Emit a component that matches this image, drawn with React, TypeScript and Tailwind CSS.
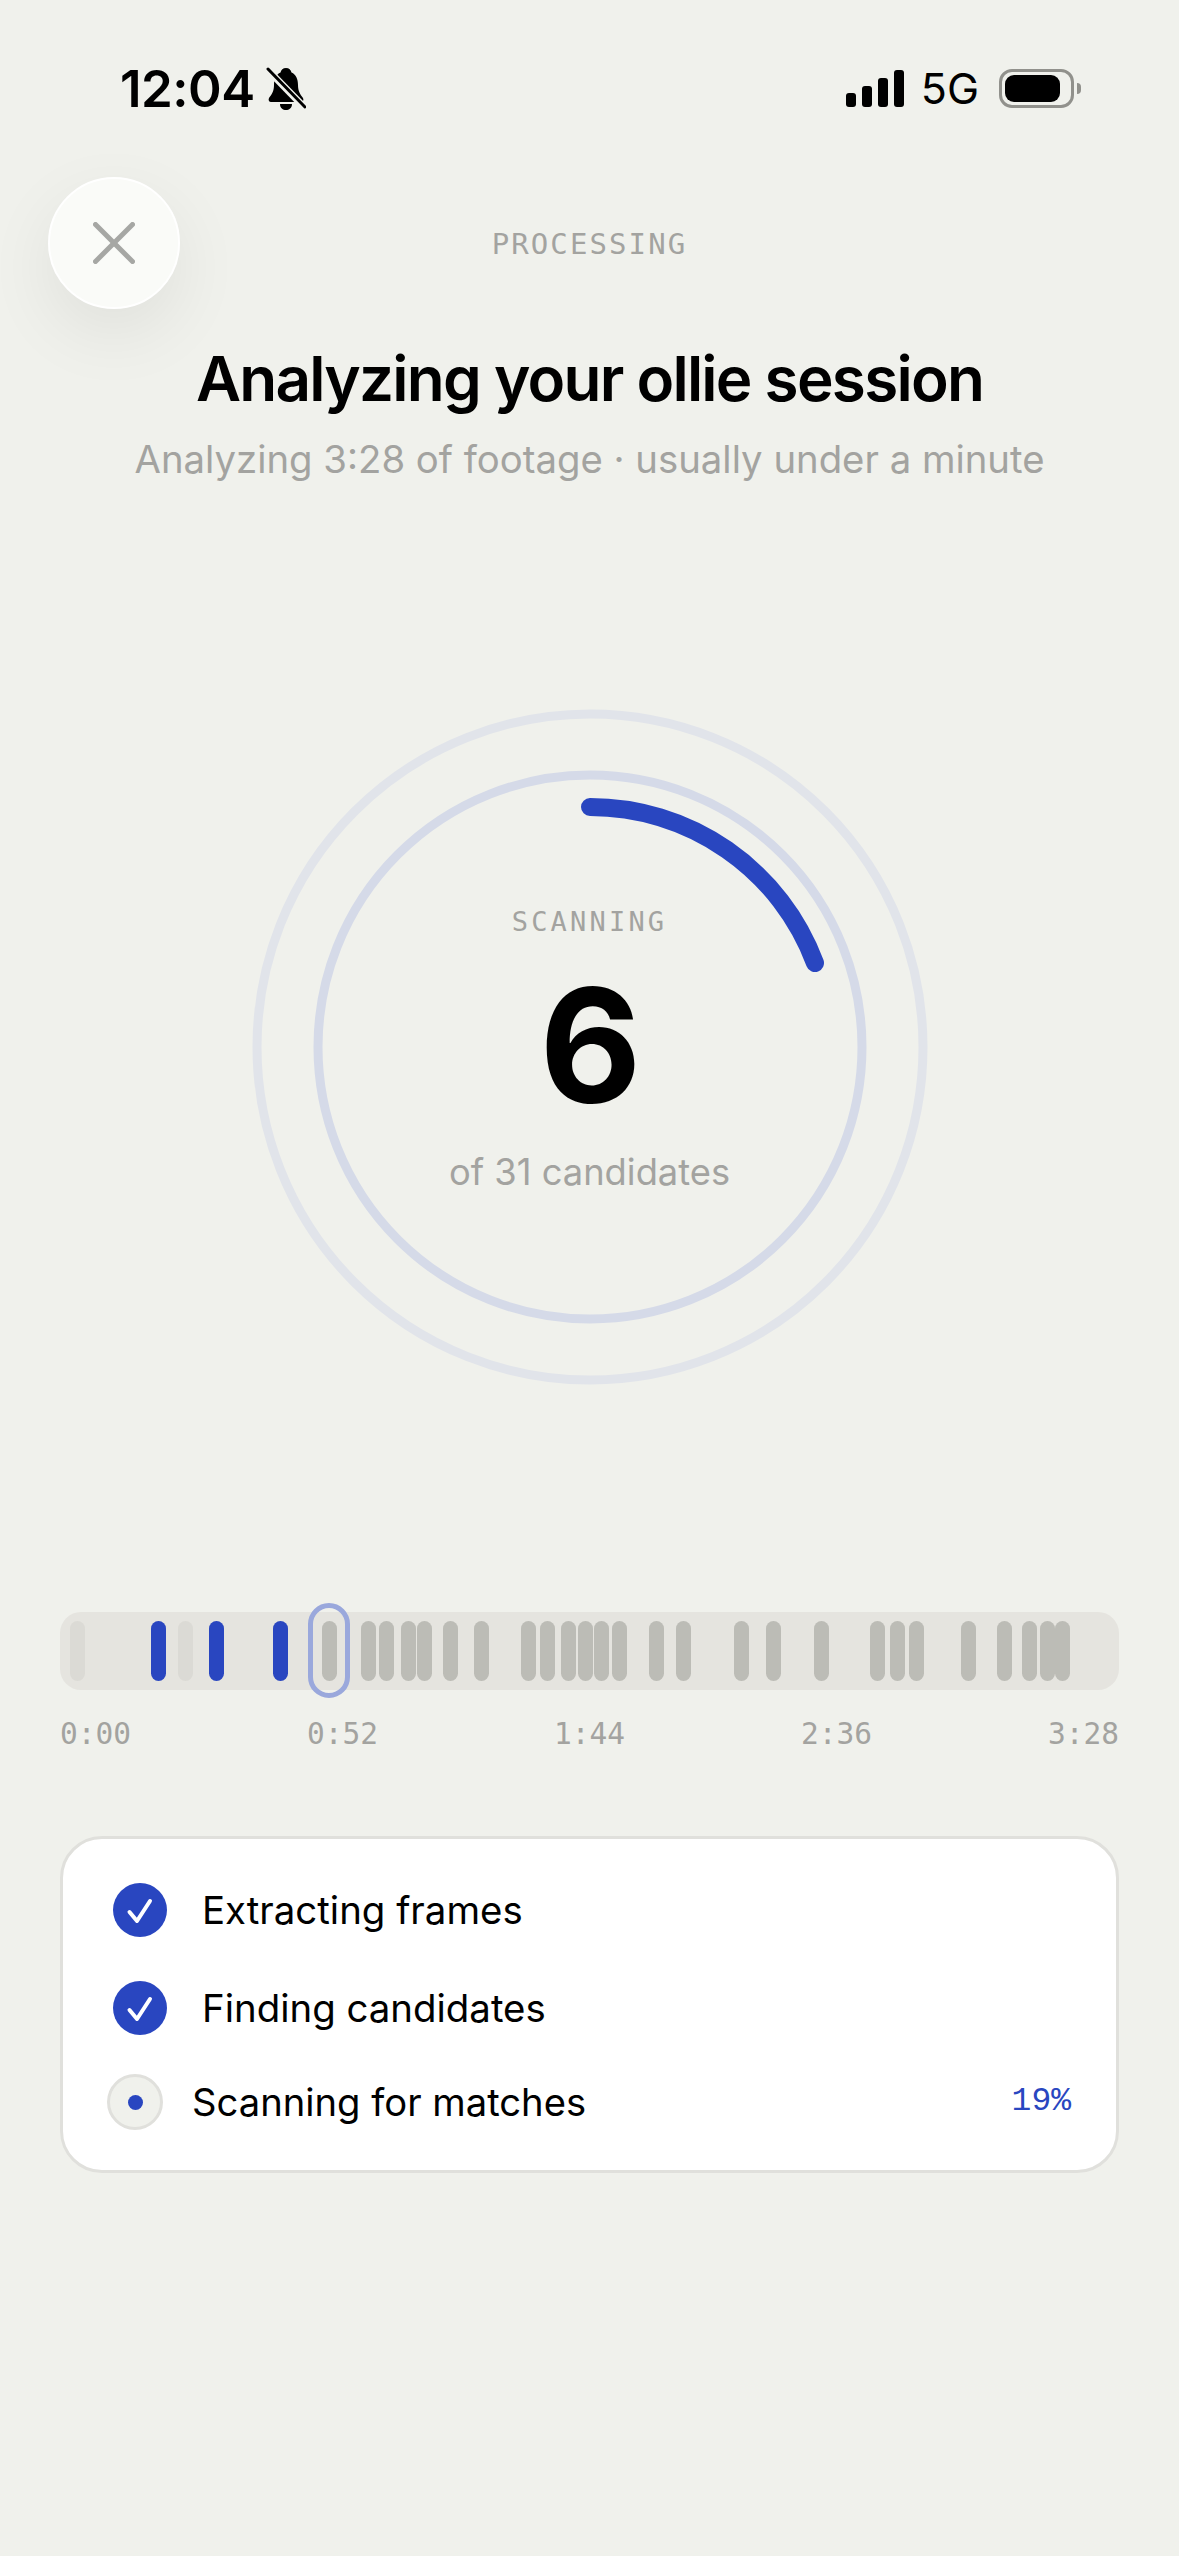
import React from "react";

// left edge of each candidate tick on the track, in px from the page edge
const TICKS = [
  70, 151, 178, 209, 273, 322, 361, 379, 401, 417, 443, 474, 521, 540, 561, 578,
  594, 612, 649, 676, 734, 766, 814, 870, 890, 909, 961, 997, 1022, 1040, 1055,
];
const SCANNED = [151, 209, 273];
const EMPTY = [70, 178];
const LABELS = ["0:00", "0:52", "1:44", "2:36", "3:28"];

const mono = "font-['DejaVu_Sans_Mono','Liberation_Mono',monospace]";

function tickClass(left: number) {
  if (SCANNED.includes(left)) return "bg-[#2946c0]";
  if (EMPTY.includes(left)) return "bg-[#dbdad5]";
  return "bg-[#bcbcb6]";
}

function StatusBar() {
  return (
    <div className="flex h-[67px] items-center justify-between pl-[120px] pr-[98px]">
      <div className="flex items-center gap-[11px]">
        <span className="text-[51px] leading-none font-semibold tracking-[-0.5px] text-black">12:04</span>
        <svg viewBox="0 0 40 44" className="h-[44px] w-[40px]">
          <path
            d="M20 1c3 0 5 2 5.500 4.500C30 7.500 32 12 32 18c0 6 2 9 5 13 1 2 0 4-2 4H5c-2 0-3-2-2-4 3-4 5-7 5-13 0-6 2-10.500 6.500-12.500C15 3 17 1 20 1zM14 37h12c0 4-3 6-6 6s-6-2-6-6z"
            fill="#000"
          />
          <path d="M1 2l38 39" stroke="#f0f1ec" strokeWidth="7" />
          <path d="M2 2l37 38" stroke="#000" strokeWidth="3" strokeLinecap="round" />
        </svg>
      </div>
      <div className="flex items-center">
        <div className="flex items-end gap-[6px]">
          <div className="h-[14px] w-[10px] rounded-[3px] bg-black" />
          <div className="h-[21px] w-[10px] rounded-[3px] bg-black" />
          <div className="h-[29px] w-[10px] rounded-[3px] bg-black" />
          <div className="h-[37px] w-[10px] rounded-[3px] bg-black" />
        </div>
        <span className="ml-[17px] text-[43px] leading-none font-normal text-black">5G</span>
        <div className="ml-[20px] flex items-center">
          <div className="flex h-[39px] w-[75px] items-center rounded-[13px] border-[3px] border-[#91918c] pl-[3px]">
            <div className="h-[27px] w-[55px] rounded-[9px] bg-black" />
          </div>
          <div className="ml-[3px] h-[11px] w-[4px] rounded-r-full bg-[#91918c]" />
        </div>
      </div>
    </div>
  );
}

function Rings() {
  return (
    <div className="relative mx-auto flex h-[680px] w-[680px] flex-col items-center">
      <svg viewBox="0 0 680 680" className="absolute inset-0 h-full w-full">
        <circle cx="340" cy="340" r="333" fill="none" stroke="#e1e4ea" strokeWidth="9" />
        <circle cx="340" cy="340" r="272" fill="none" stroke="#d5dae8" strokeWidth="9" />
        <path
          d="M340 100A240 240 0 0 1 565 256"
          fill="none"
          stroke="#2946c0"
          strokeWidth="18"
          strokeLinecap="round"
        />
      </svg>
      <span className={`relative mt-[198px] text-[27px] leading-[34px] tracking-[3.200px] text-[#a3a3a0] ${mono}`}>
        SCANNING
      </span>
      <span className="relative mt-[21px] ml-[2px] text-[157px] leading-[170px] font-bold text-black">6</span>
      <span className="relative mt-[20px] text-[36.300px] leading-[44px] text-[#a3a3a0]">of 31 candidates</span>
    </div>
  );
}

function Timeline() {
  return (
    <div className="mx-[60px]">
      <div className="relative h-[78px] rounded-[21px] bg-[#e5e4df]">
        {TICKS.map((left) => (
          <div
            key={left}
            className={`absolute top-[9px] h-[60px] w-[15px] rounded-full ${tickClass(left)}`}
            style={{ left: left - 60 }}
          />
        ))}
        <div className="absolute top-[-9px] left-[248px] h-[95px] w-[42px] rounded-full border-[5px] border-[#9aa8dc]" />
      </div>
      <div className={`mt-[24px] flex justify-between text-[29.500px] leading-[40px] text-[#a3a3a0] ${mono}`}>
        {LABELS.map((label) => (
          <span key={label}>{label}</span>
        ))}
      </div>
    </div>
  );
}

function DoneBadge() {
  return (
    <div className="h-[54px] w-[54px] shrink-0 rounded-full bg-[#2946c0]">
      <svg viewBox="0 0 54 54" className="h-[54px] w-[54px]" fill="none">
        <path d="M16.500 29l7.500 9 13-20" stroke="#fff" strokeWidth="4" strokeLinecap="round" strokeLinejoin="round" />
      </svg>
    </div>
  );
}

function Steps() {
  return (
    <div className="mx-[60px] mt-[82px] h-[337px] rounded-[42px] border-[3px] border-[#e0e0dc] bg-white pt-[44px] pr-[45px] pl-[44px]">
      <div className="ml-[6px] flex h-[54px] items-center gap-[35px]">
        <DoneBadge />
        <span className="pt-[2px] text-[38.400px] text-black">Extracting frames</span>
      </div>
      <div className="mt-[44px] ml-[6px] flex h-[54px] items-center gap-[35px]">
        <DoneBadge />
        <span className="pt-[2px] text-[38.400px] text-black">Finding candidates</span>
      </div>
      <div className="mt-[39px] flex h-[56px] items-center">
        <div className="flex h-[56px] w-[56px] shrink-0 items-center justify-center rounded-full border-[3px] border-[#e0e0dc] bg-[#f0f1ec]">
          <div className="h-[15px] w-[15px] rounded-full bg-[#2946c0]" />
        </div>
        <span className="ml-[29px] pt-[2px] text-[38.200px] text-black">Scanning for matches</span>
        <span className="ml-auto font-['Liberation_Mono',monospace] text-[33px] text-[#2946c0]">19%</span>
      </div>
    </div>
  );
}

export default function App() {
  return (
    <div className="h-[2556px] w-[1179px] overflow-hidden bg-[#f0f1ec] pt-[55px] font-['Inter',sans-serif]">
      <StatusBar />
      <div className="mt-[55px] grid grid-cols-[1fr_auto_1fr] items-center pl-[48px]">
        <button className="flex h-[132px] w-[132px] items-center justify-center rounded-full border-[2px] border-white bg-[#fafbf8] shadow-[0_24px_70px_rgba(0,0,0,0.07)]">
          <svg viewBox="0 0 42 42" className="h-[42px] w-[42px]" fill="none">
            <path d="M2.500 2.500l37 37M39.500 2.500l-37 37" stroke="#a6a7a4" strokeWidth="5" strokeLinecap="round" />
          </svg>
        </button>
        <span className={`-ml-[48px] translate-y-[1px] text-[29px] leading-none tracking-[2.100px] text-[#a3a3a0] ${mono}`}>
          PROCESSING
        </span>
        <div />
      </div>
      <h1 className="mt-[32px] text-center text-[62px] leading-[76px] font-semibold tracking-[-1.750px] text-black">
        Analyzing your ollie session
      </h1>
      <p className="mt-[19px] text-center text-[38.300px] leading-[46px] text-[#a3a3a0]">
        Analyzing 3:28 of footage · usually under a minute
      </p>
      <div className="mt-[225px]">
        <Rings />
      </div>
      <div className="mt-[225px]">
        <Timeline />
      </div>
      <Steps />
    </div>
  );
}
